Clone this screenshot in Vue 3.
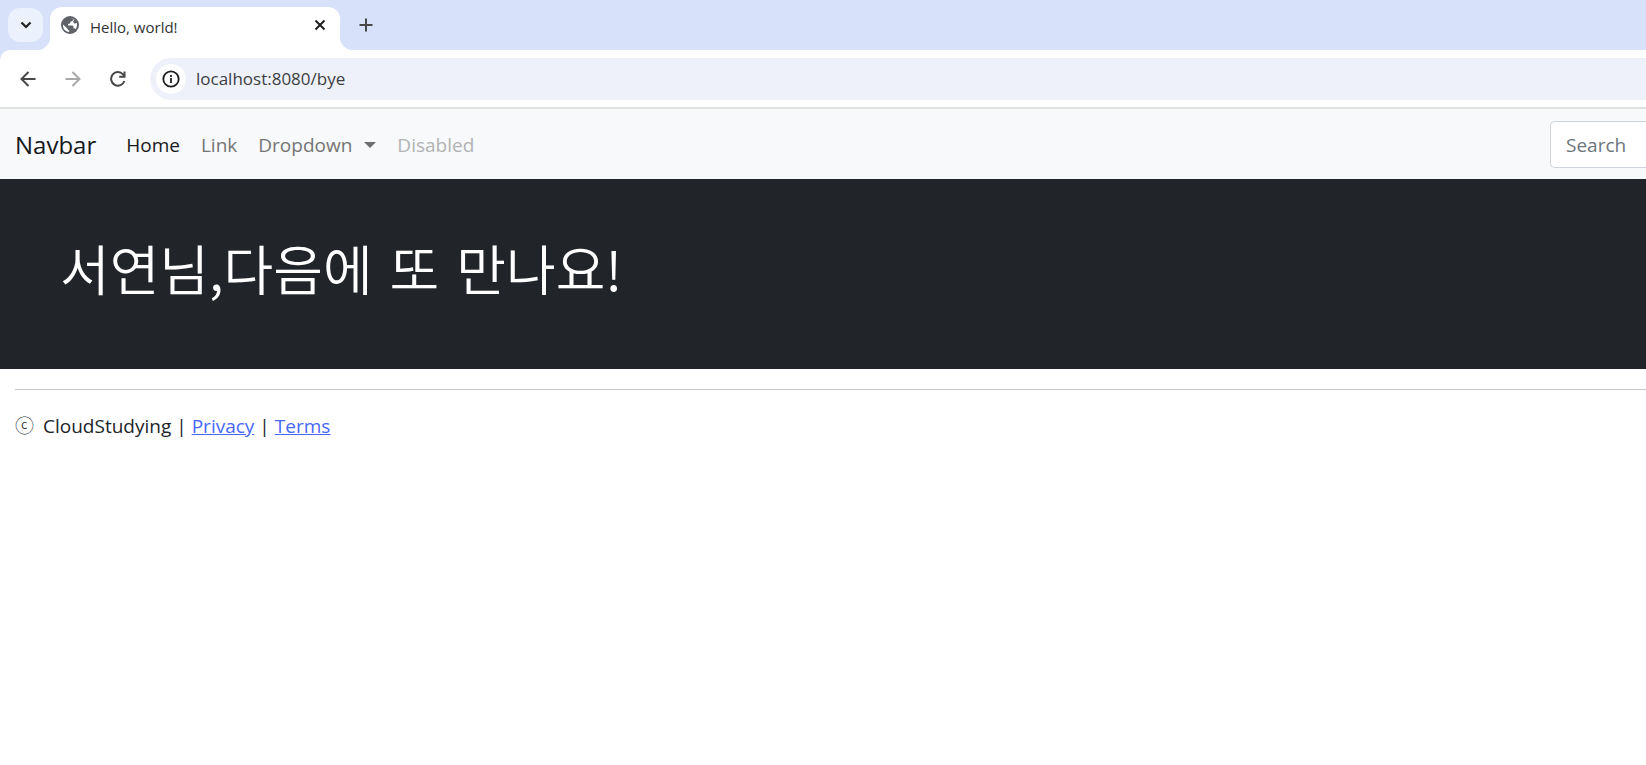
<script setup>
import { ref } from 'vue'

const address = ref('localhost:8080/bye')
const query = ref('')
</script>

<template>
  <div class="browser">
    <header class="tab-strip">
      <button class="tab-search" type="button" aria-label="Search tabs">
        <svg width="12" height="8" viewBox="0 0 12 8"><path d="M1.5 1.5 6 6l4.5-4.5" fill="none" stroke="#1f1f1f" stroke-width="2.2" /></svg>
      </button>
      <div class="tab">
        <svg class="globe" width="18" height="18" viewBox="0 0 18 18">
          <circle cx="9" cy="9" r="9" fill="#5f6368" />
          <path d="M9.6 2 12.400 2.800C12.200 5 11 5.600 9.400 5.800 9.400 7.400 8.600 8 7 8v1.600h4c1.500 0 1.600 1.200 1.600 2.600 1 0 1.800.5 2 1.100A7 7 0 0 0 16 9c0-.8-.1-1.500-.4-2.200-1 .9-2.600.9-3.200-.2-.6-1.200.2-2.400 1.200-3.200M2 8.500l4.600 4.200c0 1 .6 1.500 1.600 1.600v1.700C4.600 15.800 2 13 2 9.600z" fill="#fff" />
        </svg>
        <span class="tab-title">Hello, world!</span>
        <button class="tab-close" type="button" aria-label="Close tab">
          <svg width="12" height="12" viewBox="0 0 12 12"><path d="m1.500 1.500 9 9m0-9-9 9" fill="none" stroke="#1f1f1f" stroke-width="2" /></svg>
        </button>
      </div>
      <button class="new-tab" type="button" aria-label="New tab">
        <svg width="14" height="14" viewBox="0 0 14 14"><path d="M7 .5v13M.5 7h13" fill="none" stroke="#474747" stroke-width="2" /></svg>
      </button>
    </header>

    <div class="toolbar">
      <button class="tool" type="button" aria-label="Back">
        <svg width="16" height="16" viewBox="0 0 16 16"><path d="M15.500 8H2M8.500 1 1.500 8l7 7" fill="none" stroke="#474747" stroke-width="2" /></svg>
      </button>
      <button class="tool" type="button" aria-label="Forward" disabled>
        <svg width="16" height="16" viewBox="0 0 16 16"><path d="M.5 8H14M7.500 1l7 7-7 7" fill="none" stroke="#a8a8a8" stroke-width="2" /></svg>
      </button>
      <button class="tool" type="button" aria-label="Reload">
        <svg width="16" height="16" viewBox="0 0 16 16"><path d="M14.400 10A6.800 6.800 0 1 1 13 3.300L14.500 5" fill="none" stroke="#474747" stroke-width="2" /><path d="M15.500.5v6.300H9.200V4.800h4.300V.5z" fill="#474747" /></svg>
      </button>
      <div class="address">
        <button class="site-info" type="button" aria-label="View site information">
          <svg width="18" height="18" viewBox="0 0 18 18"><circle cx="9" cy="9" r="7.700" fill="none" stroke="#1f1f1f" stroke-width="1.800" /><path d="M9 8v5M9 5v2" stroke="#1f1f1f" stroke-width="1.800" /></svg>
        </button>
        <input v-model="address" class="url" type="text" aria-label="Address">
      </div>
    </div>

    <nav class="navbar">
      <a class="brand" href="#">Navbar</a>
      <a class="link active" href="#">Home</a>
      <a class="link" href="#">Link</a>
      <button class="link dropdown" type="button">Dropdown<span class="caret"></span></button>
      <a class="link disabled" aria-disabled="true">Disabled</a>
      <form class="search" @submit.prevent>
        <input v-model="query" type="search" placeholder="Search" aria-label="Search">
      </form>
    </nav>

    <main class="hero">
      <h1><span>서연님,다음에</span> <span>또</span> <span>만나요!</span></h1>
    </main>

    <footer class="footer">
      <p><span class="copyright">ⓒ</span><span>CloudStudying</span><span>|</span><a href="#">Privacy</a><span>|</span><a href="#">Terms</a></p>
    </footer>
  </div>
</template>

<style>
body {
  margin: 0;
  background: #fff;
}
</style>

<style scoped>
.browser {
  overflow: hidden;
  color: #212529;
  font-family: "Open Sans", "Noto Sans CJK KR", sans-serif;
  font-size: 19px;
  line-height: 30px;
}

button {
  display: flex;
  align-items: center;
  justify-content: center;
  padding: 0;
  border: 0;
  background: none;
  color: inherit;
  font: inherit;
}

.tab-strip {
  position: relative;
  z-index: 1;
  display: flex;
  height: 50px;
  padding-left: 8px;
  background: #d7e1fa;
}

.tab-search {
  width: 35px;
  height: 34px;
  margin-top: 8px;
  border-radius: 12px;
  background: #ebf2fd;
}

.tab {
  position: relative;
  display: flex;
  align-items: center;
  box-sizing: border-box;
  width: 290px;
  margin: 7px 0 0 7px;
  padding: 0 14px 7px 11px;
  border-radius: 12px 12px 0 0;
  background: #fff;
}

.tab::before,
.tab::after {
  content: "";
  position: absolute;
  bottom: 0;
  width: 14px;
  height: 14px;
}

.tab::before {
  right: 100%;
  background: radial-gradient(circle at 0 0, transparent 14px, #fff 15px);
}

.tab::after {
  left: 100%;
  background: radial-gradient(circle at 100% 0, transparent 14px, #fff 15px);
}

.tab-title {
  flex: 1;
  margin: 4px 0 0 11px;
  color: #333;
  font-size: 15px;
  line-height: 20px;
}

.new-tab {
  width: 28px;
  height: 28px;
  margin: 11px 0 0 12px;
}

.toolbar {
  display: flex;
  align-items: center;
  gap: 15px;
  height: 57px;
  padding-left: 13px;
  border-bottom: 2px solid #dfe1e0;
  border-radius: 10px 0 0 0;
  background: #fff;
  box-shadow: 0 -10px 0 #d7e1fa;
}

.tool {
  width: 30px;
  height: 30px;
}

.address {
  display: flex;
  flex: 1;
  align-items: center;
  height: 42px;
  margin-left: 2px;
  padding-left: 6px;
  border-radius: 21px 0 0 21px;
  background: #eef1fa;
}

.site-info {
  width: 30px;
  height: 30px;
  border-radius: 50%;
  background: #fff;
}

.url {
  flex: 1;
  height: 30px;
  margin-left: 10px;
  padding: 0;
  border: 0;
  background: none;
  color: #3c3e42;
  font: inherit;
  font-size: 17px;
}

.navbar {
  display: flex;
  align-items: center;
  gap: 21px;
  height: 70px;
  padding-left: 15px;
  background: #f8f9fa;
}

.brand,
.link {
  padding-top: 2px;
  text-decoration: none;
}

.brand {
  margin-right: 9px;
  color: #17191b;
  font-size: 24px;
}

.link {
  color: #747575;
}

.active {
  color: #171819;
}

.disabled {
  color: #b1b3b4;
}

.caret {
  margin-left: 12px;
  border: 6px solid transparent;
  border-top-color: #6d6e6e;
  border-bottom: 0;
}

.search {
  margin-left: auto;
}

.search input {
  display: block;
  box-sizing: border-box;
  width: 96px;
  height: 47px;
  padding: 2px 0 0 15px;
  border: 1px solid #ced4da;
  border-right: 0;
  border-radius: 5px 0 0 5px;
  background: #fff;
  font: inherit;
  appearance: none;
}

.search input::placeholder {
  color: #6c757d;
  opacity: 1;
}

.hero {
  padding: 59px 60px 71px;
  background: #212529;
  color: #fff;
}

h1 {
  display: flex;
  flex-wrap: wrap;
  gap: 17px;
  margin: 0;
  font-family: "Noto Sans CJK KR", sans-serif;
  font-size: 54px;
  font-weight: 350;
  line-height: 60px;
}

.footer {
  margin: 20px 0 0 15px;
  border-top: 1px solid #c4c7c6;
}

.footer p {
  display: flex;
  gap: 5px;
  margin: 21px 0 0;
}

.copyright {
  margin-right: 4px;
  font-weight: 300;
}

.footer a {
  color: #4768f6;
}
</style>
